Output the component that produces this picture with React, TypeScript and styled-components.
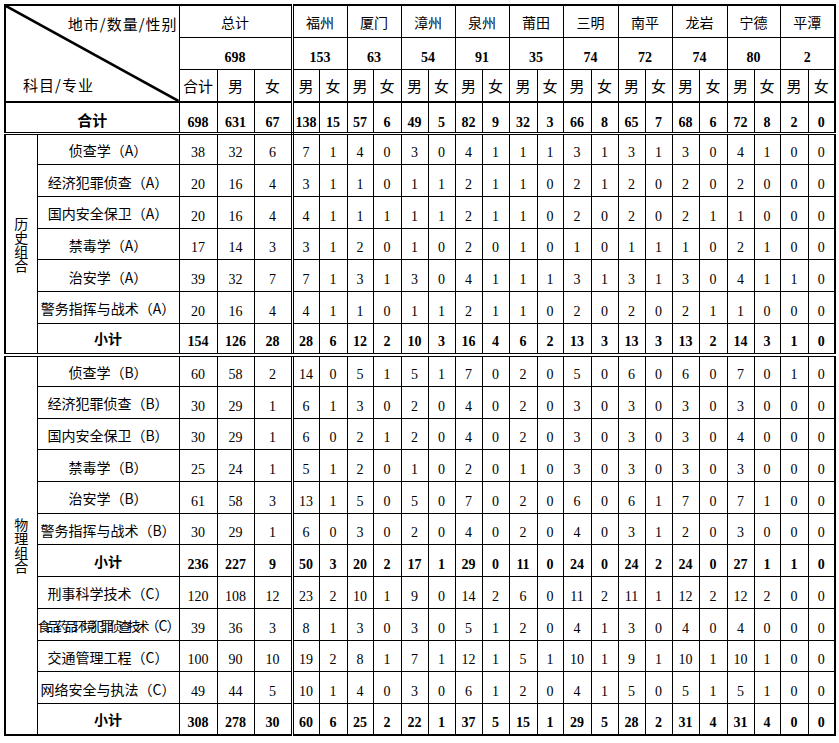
import React from 'react';
import styled, { createGlobalStyle } from 'styled-components';

const GlobalStyle = createGlobalStyle`
  html, body { margin: 0; padding: 0; background: #fff; }
  body { color: #000; font-family: "Noto Sans CJK SC", sans-serif; }
`;

const NUM = '"Liberation Serif", "Noto Sans CJK SC", serif';
const CJK = '"Noto Sans CJK SC", "Liberation Sans", sans-serif';

type Edge = 'thin' | 'thick' | 'double' | 'wide';
const edge = (e?: Edge) =>
  e === 'thick' ? '2px solid #000' : e === 'double' ? '3px double #000' : e === 'wide' ? '4px double #000' : '1px solid #000';

const Page = styled.div`
  padding: 4px 0 0 4px;
`;

const Sheet = styled.table`
  border-collapse: collapse;
  table-layout: fixed;
  width: 832px;
  border: 2px solid #000;
`;

const Row = styled.tr<{ $h: number }>`
  height: ${(p) => p.$h}px;
`;

const Cell = styled.td<{ $right?: Edge; $bottom?: Edge }>`
  border: 1px solid #000;
  border-right: ${(p) => edge(p.$right)};
  border-bottom: ${(p) => edge(p.$bottom)};
  padding: 0;
  text-align: center;
  white-space: nowrap;
  overflow: visible;
`;

const Num = styled(Cell)<{ $bold?: boolean; $pad?: number }>`
  font-family: ${NUM};
  font-size: 14px;
  line-height: 16px;
  font-weight: ${(p) => (p.$bold ? 700 : 400)};
  vertical-align: bottom;
  padding-bottom: ${(p) => p.$pad ?? 3}px;
`;

const Label = styled(Cell)<{ $bold?: boolean; $top?: number; $size?: number }>`
  font-family: ${CJK};
  font-size: ${(p) => p.$size ?? 14}px;
  line-height: 18px;
  font-weight: ${(p) => (p.$bold ? 700 : 400)};
  vertical-align: middle;
  padding-top: ${(p) => p.$top ?? 0}px;
`;

const Squeezed = styled.span`
  font-size: 13px;
  letter-spacing: -4px;
`;

const Tail = styled.span`
  letter-spacing: -1px;
`;

const Group = styled(Cell)`
  font-family: ${CJK};
  font-size: 14px;
  line-height: 14px;
  vertical-align: middle;
`;

const VerticalText = styled.span`
  display: inline-block;
  width: 14px;
  white-space: normal;
  word-break: break-all;
  line-height: 14px;
`;

const Diag = styled(Cell)`
  position: relative;
  vertical-align: top;
`;

const DiagInner = styled.div`
  height: 94px;
  display: flex;
  flex-direction: column;
  justify-content: space-between;
  padding: 8px 1px 5px 17px;
  box-sizing: border-box;
  font-family: ${CJK};
  font-size: 15px;
  line-height: 20px;
  letter-spacing: 1px;
`;

const DiagTop = styled.div`
  align-self: flex-end;
`;

const DiagBottom = styled.div`
  align-self: flex-start;
`;

const DiagLine = styled.svg`
  position: absolute;
  inset: 0;
  width: 100%;
  height: 100%;
  pointer-events: none;
`;

const colWidths = [32, 142, 38, 37, 38, 27, 28, 26, 28, 27, 27, 27, 27, 28, 26, 28, 27, 27, 27, 27, 28, 27, 26, 28, 27];

const cities: [string, number][] = [
  ['福州', 153], ['厦门', 63], ['漳州', 54], ['泉州', 91], ['莆田', 35],
  ['三明', 74], ['南平', 72], ['龙岩', 74], ['宁德', 80], ['平潭', 2],
];

type DataRow = { name: React.ReactNode; v: number[]; sub?: boolean };

const parse = (s: string) => s.trim().split(/\s+/).map(Number);

const history: DataRow[] = [
  { name: '侦查学（A）', v: parse('38 32 6 7 1 4 0 3 0 4 1 1 1 3 1 3 1 3 0 4 1 0 0') },
  { name: '经济犯罪侦查（A）', v: parse('20 16 4 3 1 1 0 1 1 2 1 1 0 2 1 2 0 2 0 2 0 0 0') },
  { name: '国内安全保卫（A）', v: parse('20 16 4 4 1 1 1 1 1 2 1 1 0 2 0 2 0 2 1 1 0 0 0') },
  { name: '禁毒学（A）', v: parse('17 14 3 3 1 2 0 1 0 2 0 1 0 1 0 1 1 1 0 2 1 0 0') },
  { name: '治安学（A）', v: parse('39 32 7 7 1 3 1 3 0 4 1 1 1 3 1 3 1 3 0 4 1 1 0') },
  { name: '警务指挥与战术（A）', v: parse('20 16 4 4 1 1 0 1 1 2 1 1 0 2 0 2 0 2 1 1 0 0 0') },
  { name: '小计', sub: true, v: parse('154 126 28 28 6 12 2 10 3 16 4 6 2 13 3 13 3 13 2 14 3 1 0') },
];

const physics: DataRow[] = [
  { name: '侦查学（B）', v: parse('60 58 2 14 0 5 1 5 1 7 0 2 0 5 0 6 0 6 0 7 0 1 0') },
  { name: '经济犯罪侦查（B）', v: parse('30 29 1 6 1 3 0 2 0 4 0 2 0 3 0 3 0 3 0 3 0 0 0') },
  { name: '国内安全保卫（B）', v: parse('30 29 1 6 0 2 1 2 0 4 0 2 0 3 0 3 0 3 0 4 0 0 0') },
  { name: '禁毒学（B）', v: parse('25 24 1 5 1 2 0 1 0 2 0 1 0 3 0 3 0 3 0 3 0 0 0') },
  { name: '治安学（B）', v: parse('61 58 3 13 1 5 0 5 0 7 0 2 0 6 0 6 1 7 0 7 1 0 0') },
  { name: '警务指挥与战术（B）', v: parse('30 29 1 6 0 3 0 2 0 4 0 2 0 4 0 3 1 2 0 3 0 0 0') },
  { name: '小计', sub: true, v: parse('236 227 9 50 3 20 2 17 1 29 0 11 0 24 0 24 2 24 0 27 1 1 0') },
  { name: '刑事科学技术（C）', v: parse('120 108 12 23 2 10 1 9 0 14 2 6 0 11 2 11 1 12 2 12 2 0 0') },
  {
    name: (
      <>
        <Squeezed>食品药品环境犯罪侦查技术</Squeezed>
        <Tail>（C）</Tail>
      </>
    ),
    v: parse('39 36 3 8 1 3 0 3 0 5 1 2 0 4 1 3 0 4 0 4 0 0 0'),
  },
  { name: '交通管理工程（C）', v: parse('100 90 10 19 2 8 1 7 1 12 1 5 1 10 1 9 1 10 1 10 1 0 0') },
  { name: '网络安全与执法（C）', v: parse('49 44 5 10 1 4 0 3 0 6 1 2 0 4 1 5 0 5 1 5 1 0 0') },
  { name: '小计', sub: true, v: parse('308 278 30 60 6 25 2 22 1 37 5 15 1 29 5 28 2 31 4 31 4 0 0') },
];

const totals = parse('698 631 67 138 15 57 6 49 5 82 9 32 3 66 8 65 7 68 6 72 8 2 0');

const ROW_H = 31.7;

function NumCells({ v, bold, bottom, pad }: { v: number[]; bold?: boolean; bottom?: Edge; pad?: number }) {
  return (
    <>
      {v.map((n, i) => (
        <Num key={i} $bold={bold} $bottom={bottom} $pad={pad} $right={i === 2 ? 'double' : undefined}>
          {n}
        </Num>
      ))}
    </>
  );
}

function Section({ title, rows, bottom }: { title: string; rows: DataRow[]; bottom?: Edge }) {
  return (
    <>
      {rows.map((r, i) => {
        const last = i === rows.length - 1;
        const b = last ? bottom : undefined;
        return (
          <Row key={i} $h={ROW_H}>
            {i === 0 && (
              <Group rowSpan={rows.length} $bottom={bottom}>
                <VerticalText>{title}</VerticalText>
              </Group>
            )}
            <Label $bold={r.sub} $top={r.sub ? 0 : 2} $bottom={b}>
              {r.name}
            </Label>
            <NumCells v={r.v} bold={r.sub} bottom={b} />
          </Row>
        );
      })}
    </>
  );
}

export default function App() {
  return (
    <>
      <GlobalStyle />
      <Page>
        <Sheet>
          <colgroup>
            {colWidths.map((w, i) => (
              <col key={i} style={{ width: w }} />
            ))}
          </colgroup>
          <tbody>
            <Row $h={32}>
              <Diag rowSpan={3} colSpan={2} $bottom="thick">
                <DiagLine viewBox="0 0 100 100" preserveAspectRatio="none">
                  <line x1="0" y1="0" x2="100" y2="100" stroke="#000" strokeWidth="2.6" vectorEffect="non-scaling-stroke" />
                </DiagLine>
                <DiagInner>
                  <DiagTop>地市/数量/性别</DiagTop>
                  <DiagBottom>科目/专业</DiagBottom>
                </DiagInner>
              </Diag>
              <Label colSpan={3} $right="double" $top={2}>
                总计
              </Label>
              {cities.map(([c]) => (
                <Label key={c} colSpan={2} $top={2}>
                  {c}
                </Label>
              ))}
            </Row>
            <Row $h={32.5}>
              <Num colSpan={3} $right="double" $bold>
                698
              </Num>
              {cities.map(([c, n]) => (
                <Num key={c} colSpan={2} $bold>
                  {n}
                </Num>
              ))}
            </Row>
            <Row $h={32.5}>
              <Label $bottom="thick" $size={15}>合计</Label>
              <Label $bottom="thick" $size={15}>男</Label>
              <Label $bottom="thick" $size={15} $right="double">女</Label>
              {cities.map(([c]) => (
                <React.Fragment key={c}>
                  <Label $bottom="thick" $size={15}>男</Label>
                  <Label $bottom="thick" $size={15}>女</Label>
                </React.Fragment>
              ))}
            </Row>
            <Row $h={31}>
              <Label colSpan={2} $bold $top={5} $size={15} $bottom="double">
                合计
              </Label>
              <NumCells v={totals} bold bottom="double" pad={1} />
            </Row>
            <Section title="历史组合" rows={history} bottom="wide" />
            <Section title="物理组合" rows={physics} />
          </tbody>
        </Sheet>
      </Page>
    </>
  );
}
